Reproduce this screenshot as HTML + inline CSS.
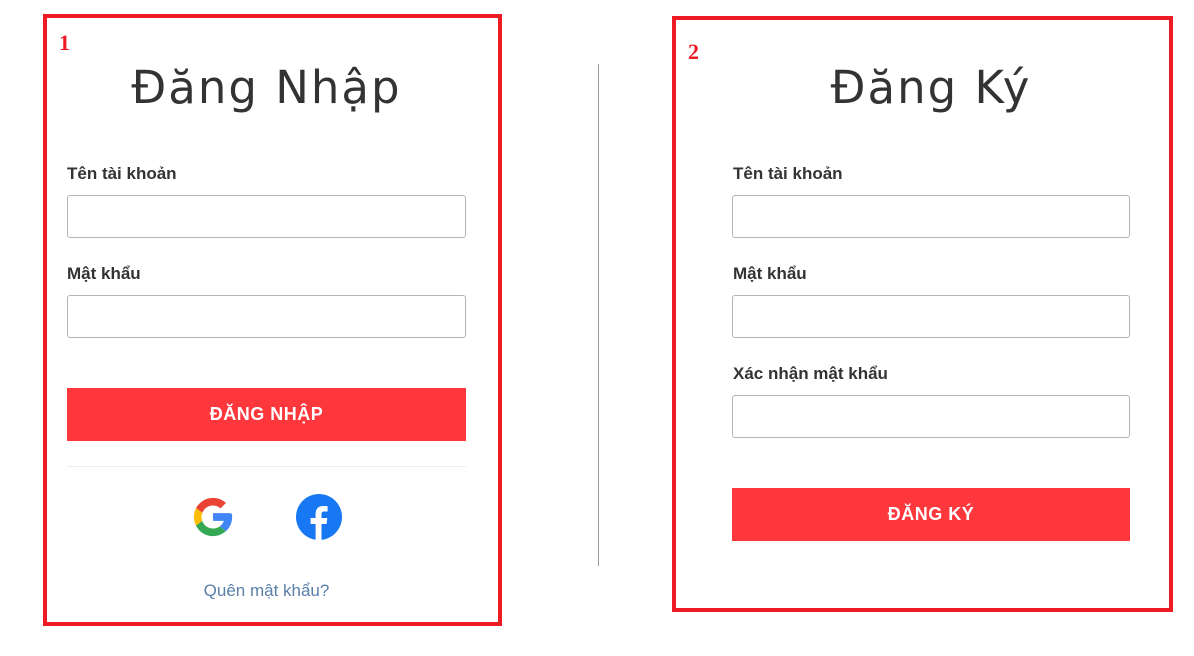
<!DOCTYPE html>
<html><head><meta charset="utf-8"><style>
*{box-sizing:border-box;margin:0;padding:0}
body{width:1194px;height:656px;background:#fff;position:relative;overflow:hidden;font-family:"Liberation Sans","DejaVu Sans",sans-serif;color:#333}
.a{position:absolute}
.box{position:absolute;border:4px solid #ed1c24}
.num{position:absolute;font-family:"Liberation Serif",serif;font-weight:bold;color:#ed1c24;font-size:22px}
.title{position:absolute;font-family:"DejaVu Sans",sans-serif;font-size:45px;color:#333;text-align:center;letter-spacing:2px}
.lbl{position:absolute;font-weight:bold;font-size:17px;color:#333}
.inp{position:absolute;border:1px solid #b5b5b5;border-radius:3px;height:43px}
.btn{position:absolute;background:#fd373c;color:#fff;font-weight:bold;font-size:18px;text-align:center;line-height:53px;height:53px;letter-spacing:.5px}
</style></head><body>
<div class="box" style="left:43px;top:14px;width:459px;height:612px"></div>
<div class="num" style="left:59px;top:30px">1</div>
<div class="title" style="left:67px;width:399px;top:61px">Đăng Nhập</div>
<div class="lbl" style="left:67px;top:164px">Tên tài khoản</div>
<div class="inp" style="left:67px;top:195px;width:399px"></div>
<div class="lbl" style="left:67px;top:264px">Mật khẩu</div>
<div class="inp" style="left:67px;top:295px;width:399px"></div>
<div class="btn" style="left:67px;top:388px;width:399px">ĐĂNG NHẬP</div>
<div class="a" style="left:67px;top:466px;width:399px;height:1px;background:#eee"></div>
<svg class="a" style="left:190px;top:494px" width="46" height="46" viewBox="0 0 48 48">
<path fill="#EA4335" d="M6.3 14.7l6.6 4.8C14.7 15.1 19 12 24 12c3.1 0 5.8 1.2 7.9 3l5.7-5.7C34 6.1 29.3 4 24 4 16.3 4 9.7 8.3 6.3 14.7z"/>
<path fill="#34A853" d="M24 44c5.2 0 9.9-2 13.4-5.2l-6.2-5.2C29.2 35.1 26.7 36 24 36c-5.2 0-9.6-3.3-11.3-8l-6.5 5C9.5 39.6 16.2 44 24 44z"/>
<path fill="#FBBC05" d="M6.3 14.7C5 17.5 4 20.6 4 24s1 6.5 2.2 9l6.5-5C12.3 26.7 12 25.4 12 24s.3-2.7.9-4.5z"/>
<path fill="#4285F4" d="M43.6 20.5H42V20H24v8h11.3c-.8 2.2-2.2 4.2-4.1 5.6l6.2 5.2C37 39.2 44 34 44 24c0-1.3-.1-2.4-.4-3.5z"/>
</svg>
<svg class="a" style="left:296px;top:494px" width="46" height="46" viewBox="0 0 46 46">
<circle cx="23" cy="23" r="23" fill="#1877f2"/>
<path fill="#fff" d="M25.5 46V30h5l.8-6h-5.8v-3.6c0-1.7.5-2.9 3-2.9h3.1V12.2c-.5-.1-2.4-.2-4.5-.2-4.5 0-7.5 2.7-7.5 7.7V24h-5v6h5v16z"/>
</svg>
<div class="a" style="left:67px;width:399px;top:581px;text-align:center;font-size:17px;color:#5a7fa8">Quên mật khẩu?</div>
<div class="a" style="left:598px;top:64px;width:1px;height:502px;background:#999"></div>
<div class="box" style="left:672px;top:16px;width:501px;height:596px"></div>
<div class="num" style="left:688px;top:39px">2</div>
<div class="title" style="left:732px;width:398px;top:61px">Đăng Ký</div>
<div class="lbl" style="left:733px;top:164px">Tên tài khoản</div>
<div class="inp" style="left:732px;top:195px;width:398px"></div>
<div class="lbl" style="left:733px;top:264px">Mật khẩu</div>
<div class="inp" style="left:732px;top:295px;width:398px"></div>
<div class="lbl" style="left:733px;top:364px">Xác nhận mật khẩu</div>
<div class="inp" style="left:732px;top:395px;width:398px"></div>
<div class="btn" style="left:732px;top:488px;width:398px">ĐĂNG KÝ</div>
</body></html>
